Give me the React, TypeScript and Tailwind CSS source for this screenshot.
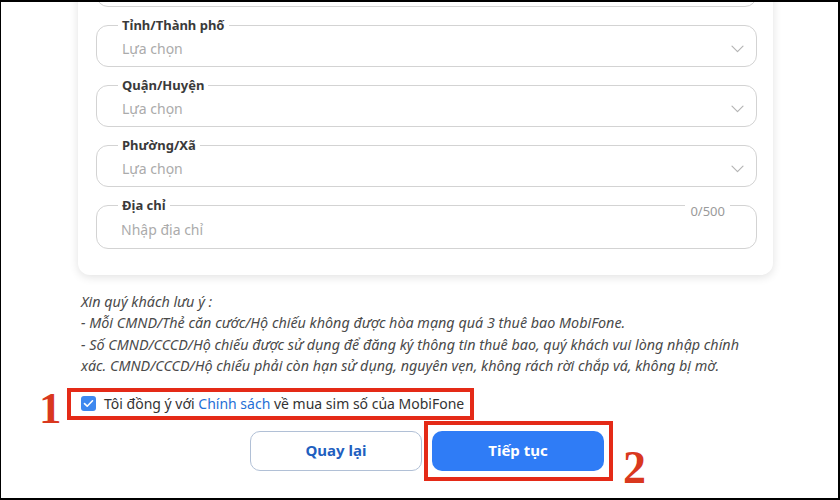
import React from 'react';

const font = { fontFamily: '"Noto Sans", "Liberation Sans", sans-serif' };

const Chevron: React.FC = () => (
  <svg width="13" height="8" viewBox="0 0 13 8" fill="none" className="shrink-0">
    <path d="M1 1.2l5.5 5.5 5.5-5.5" stroke="#b5b5b5" strokeWidth="1.2" strokeLinecap="round" strokeLinejoin="round" />
  </svg>
);

const SelectField: React.FC<{ label: string }> = ({ label }) => (
  <fieldset className="border border-[#d3d3d3] rounded-[12px] px-0 pb-0 m-0 min-w-0">
    <legend className="ml-[21px] px-[4px] text-[13px] leading-[16px] font-bold text-[#3a3a3a]">{label}</legend>
    <div className="h-[35px] flex items-center justify-between pl-[25px] pr-[12px] -mt-[2px]">
      <span className="text-[14px] text-[#ababab]">Lựa chọn</span>
      <Chevron />
    </div>
  </fieldset>
);

const App: React.FC = () => {
  return (
    <div className="w-[840px] h-[500px] overflow-hidden relative bg-white border-t-2 border-l border-r-2 border-b-2 border-black" style={font}>
      <div className="ml-[77px] w-[695px] flex flex-col">
        {/* Card (top part scrolled out of view) */}
        <div className="-mt-[63px] bg-white rounded-[12px] shadow-[0_2px_10px_rgba(0,0,0,0.12)] pt-[18px] pb-[26px] pl-[18px] pr-[16px] flex flex-col gap-[10px]">
          <SelectField label="Quốc gia" />
          <SelectField label="Tỉnh/Thành phố" />
          <SelectField label="Quận/Huyện" />
          <SelectField label="Phường/Xã" />
          <fieldset className="relative border border-[#d3d3d3] rounded-[12px] px-0 pb-0 m-0 min-w-0">
            <legend className="ml-[21px] px-[4px] text-[13px] leading-[16px] font-bold text-[#3a3a3a]">Địa chỉ</legend>
            <span className="absolute right-[26px] -top-[10px] bg-white px-[5px] text-[13px] leading-[16px] text-[#9a9a9a]">0/500</span>
            <div className="h-[37px] flex items-center pl-[24px] -mt-[2px]">
              <span className="text-[14px] text-[#ababab]">Nhập địa chỉ</span>
            </div>
          </fieldset>
        </div>

        {/* Notes */}
        <div className="mt-[16px] ml-[3px] italic text-[14.35px] leading-[21.4px] text-[#4a4a4a] whitespace-nowrap">
          <p>Xin quý khách lưu ý :</p>
          <p>- Mỗi CMND/Thẻ căn cước/Hộ chiếu không được hòa mạng quá 3 thuê bao MobiFone.</p>
          <p>- Số CMND/CCCD/Hộ chiếu được sử dụng để đăng ký thông tin thuê bao, quý khách vui lòng nhập chính</p>
          <p>xác. CMND/CCCD/Hộ chiếu phải còn hạn sử dụng, nguyên vẹn, không rách rời chắp vá, không bị mờ.</p>
        </div>

        {/* Agreement */}
        <div className="mt-[11px] -ml-[11px] self-start border-4 border-[#e42a17] h-[32px] pl-[10px] pr-[6px] flex items-center gap-[8px]">
          <span className="w-[15px] h-[15px] rounded-[3px] bg-[#3d88ef] flex items-center justify-center">
            <svg width="11" height="9" viewBox="0 0 11 9" fill="none">
              <path d="M1.5 4.6l2.7 2.6L9.5 1.8" stroke="white" strokeWidth="1.6" strokeLinecap="round" strokeLinejoin="round" />
            </svg>
          </span>
          <span className="text-[14px] text-[#333]">
            Tôi đồng ý với <span className="text-[#1f6fd6]">Chính sách</span> về mua sim số của MobiFone
          </span>
        </div>

        {/* Buttons */}
        <div className="mt-[1px] flex items-start">
          <button className="ml-[172px] mt-[10px] w-[172px] h-[40px] rounded-[10px] border border-[#b1c0d6] bg-white text-[15px] font-bold text-[#1f5fc0]">
            Quay lại
          </button>
          <div className="ml-[2px] border-4 border-[#e42a17] pt-[6px] pb-[6px] pl-[4px] pr-[5px]">
            <button className="w-[172px] h-[40px] rounded-[10px] bg-[#2f7cf6] text-[15px] font-bold text-white">
              Tiếp tục
            </button>
          </div>
        </div>
      </div>

      {/* Annotation numbers */}
      <span className="absolute left-[38px] top-[381px] text-[45px] leading-[50px] font-bold text-[#d9381e]" style={{ fontFamily: '"Liberation Serif", serif' }}>1</span>
      <span className="absolute left-[622px] top-[440px] text-[46px] leading-[52px] font-bold text-[#d9381e]" style={{ fontFamily: '"Liberation Serif", serif' }}>2</span>
    </div>
  );
};

export default App;
